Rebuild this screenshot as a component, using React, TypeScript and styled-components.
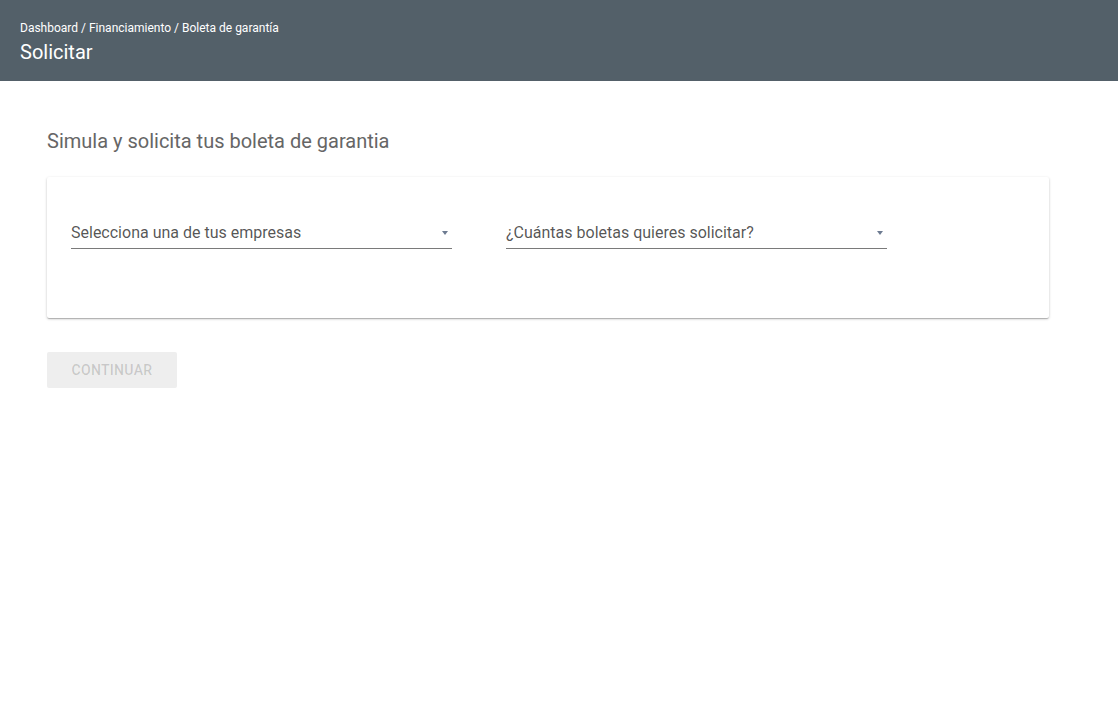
import React from "react";
import styled, { createGlobalStyle } from "styled-components";

const Global = createGlobalStyle`
  html, body { margin: 0; padding: 0; background: #fff; }
  body { font-family: Roboto, "Noto Sans", sans-serif; }
`;

const Header = styled.header`
  background: #536069;
  height: 81px;
  box-sizing: border-box;
  padding: 20px 20px 0 20px;
  color: #fff;
`;

const Breadcrumb = styled.div`
  font-size: 12px;
  line-height: 16px;
`;

const Title = styled.h1`
  margin: 3px 0 0;
  font-size: 20px;
  font-weight: 400;
  line-height: 26px;
`;

const Main = styled.main`
  padding: 47px 47px 0;
  width: 1002px;
`;

const Heading = styled.h2`
  margin: 0;
  font-size: 20px;
  font-weight: 400;
  line-height: 26px;
  color: #666;
`;

const Card = styled.section`
  margin-top: 23px;
  height: 141px;
  box-sizing: border-box;
  padding: 47px 24px 0;
  background: #fff;
  border-radius: 2px;
  box-shadow: 0 1px 3px rgba(0, 0, 0, 0.2), 0 1px 1px rgba(0, 0, 0, 0.12),
    0 2px 1px -1px rgba(0, 0, 0, 0.1);
  display: flex;
  gap: 54px;
  align-items: flex-start;
`;

const Select = styled.div`
  width: 381px;
  height: 25px;
  box-sizing: border-box;
  border-bottom: 1px solid #7a7a7a;
  display: flex;
  align-items: flex-start;
  justify-content: space-between;
  font-size: 16px;
  line-height: 18px;
  color: rgba(0, 0, 0, 0.68);
`;

const Arrow = styled.span`
  width: 0;
  height: 0;
  margin: 7px 4px 0 0;
  border-left: 3.5px solid transparent;
  border-right: 3.5px solid transparent;
  border-top: 4px solid #6d7b91;
`;

const Button = styled.button`
  margin-top: 34px;
  width: 130px;
  height: 36px;
  border: none;
  border-radius: 2px;
  background: #eeeeee;
  color: rgba(0, 0, 0, 0.16);
  font-family: Roboto, sans-serif;
  font-weight: 500;
  font-size: 14px;
  letter-spacing: 0.3px;
  text-transform: uppercase;
  cursor: default;
`;

export default function App() {
  return (
    <>
      <Global />
      <Header>
        <Breadcrumb>Dashboard / Financiamiento / Boleta de garantía</Breadcrumb>
        <Title>Solicitar</Title>
      </Header>
      <Main>
        <Heading>Simula y solicita tus boleta de garantia</Heading>
        <Card>
          <Select>
            <span>Selecciona una de tus empresas</span>
            <Arrow />
          </Select>
          <Select>
            <span>¿Cuántas boletas quieres solicitar?</span>
            <Arrow />
          </Select>
        </Card>
        <Button disabled>Continuar</Button>
      </Main>
    </>
  );
}
